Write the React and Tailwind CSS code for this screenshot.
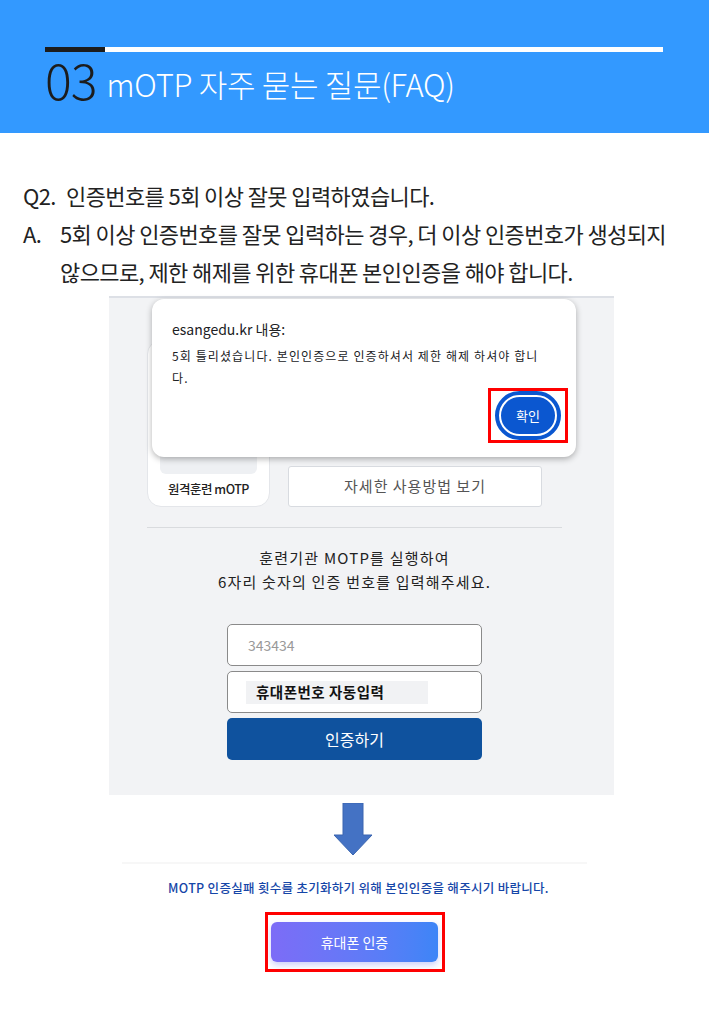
export default function App() {
  return (
    <div className="w-[709px] h-[1024px] bg-white overflow-hidden font-['Noto_Sans_CJK_KR',sans-serif]">
      {/* header */}
      <div className="h-[133px] bg-[#3399ff] pl-[45px] pt-[47px]">
        <div className="flex w-[618px] h-[5px]">
          <div className="w-[60px] bg-[#1c1c1c]" />
          <div className="flex-1 bg-white" />
        </div>
        <div className="flex items-end mt-[1px] h-[50px]">
          <span className="text-[50px] leading-[50px] font-light text-[#1c1c1c] tracking-[-1px]">03</span>
          <span className="ml-[10px] mb-[1px] text-[31px] leading-[36px] font-light text-white tracking-[-0.3px]">mOTP 자주 묻는 질문(FAQ)</span>
        </div>
      </div>

      {/* question */}
      <div className="pl-[23px] pt-[43px] text-[22px] leading-[38px] text-[#222] tracking-[-0.6px]">
        <div className="flex">
          <span className="w-[43px]">Q2.</span>
          <span>인증번호를 5회 이상 잘못 입력하였습니다.</span>
        </div>
        <div className="flex">
          <span className="w-[37px] shrink-0">A.</span>
          <span>
            5회 이상 인증번호를 잘못 입력하는 경우, 더 이상 인증번호가 생성되지
            <br />
            않으므로, 제한 해제를 위한 휴대폰 본인인증을 해야 합니다.
          </span>
        </div>
      </div>

      {/* screenshot */}
      <div className="relative ml-[109px] mt-[6px] w-[505px] h-[499px] bg-[#f2f3f5] border-t-2 border-[#dde0e6] pl-[38px] pt-[42px]">
        <div className="w-[415px]">
          <div className="flex items-end gap-[18px]">
            <div className="w-[123px] h-[167px] bg-white rounded-[14px] border border-[#e4e6ea] pt-[20px] px-[12px]">
              <div className="h-[113px] bg-[#eef0f3] rounded-[6px]" />
              <div className="text-[12.5px] leading-[30px] font-medium text-[#222] text-center tracking-[-0.5px]">원격훈련 mOTP</div>
            </div>
            <div className="w-[254px] h-[41px] bg-white border border-[#d8dbe0] rounded-[3px] flex items-center justify-center text-[15px] text-[#555] tracking-[1px]">
              자세한 사용방법 보기
            </div>
          </div>
          <div className="h-px bg-[#d9dbde] mt-[20px]" />
          <div className="mt-[18px] text-center text-[15px] leading-[24px] text-[#222] tracking-[1.2px]">
            훈련기관 MOTP를 실행하여
            <br />
            6자리 숫자의 인증 번호를 입력해주세요.
          </div>
          <div className="mx-auto w-[255px] mt-[30px] flex flex-col gap-[5px]">
            <div className="h-[42px] bg-white border border-[#8a8a8a] rounded-[5px] flex items-center pl-[20px] text-[14px] text-[#999]">
              343434
            </div>
            <div className="h-[42px] bg-white border border-[#8a8a8a] rounded-[5px] flex items-center pl-[18px]">
              <div className="w-[182px] h-[23px] bg-[#f1f2f4] flex items-center pl-[10px] text-[14.5px] font-bold text-[#111] tracking-[0.5px]">
                휴대폰번호 자동입력
              </div>
            </div>
            <div className="h-[42px] bg-[#0f529e] rounded-[5px] flex items-center justify-center text-[16px] text-white">
              인증하기
            </div>
          </div>
        </div>

        {/* alert dialog overlay */}
        <div className="absolute left-[43px] top-[1px] w-[424px] h-[158px] bg-white rounded-[12px] shadow-[0_2px_6px_rgba(0,0,0,0.3)] pl-[20px] pr-[12px] pt-[20px]">
          <div className="text-[14px] leading-[20px] text-[#202124]">esangedu.kr 내용:</div>
          <div className="mt-[6px] text-[12px] leading-[22px] text-[#202124] tracking-[1.1px] whitespace-nowrap">
            5회 틀리셨습니다. 본인인증으로 인증하셔서 제한 해제 하셔야 합니
            <br />
            다.
          </div>
          <div className="absolute right-[8px] top-[89px] w-[80px] h-[55px] border-[3px] border-[#ff0000] flex items-center justify-center">
            <div className="w-[66px] h-[49px] rounded-full bg-[#0b57d0] border-[2px] border-[#0b57d0] flex items-center justify-center">
              <div className="w-[58px] h-[41px] rounded-full border-[2px] border-white flex items-center justify-center text-[13px] text-white">확인</div>
            </div>
          </div>
        </div>
      </div>

      {/* arrow */}
      <div className="flex justify-center mt-[8px]">
        <svg width="40" height="53" viewBox="0 0 40 53" className="ml-[-4px]">
          <path d="M10 0 H30 V32 H39 L20 52 L1 32 H10 Z" fill="#4472c4" stroke="#3a65b0" strokeWidth="1" />
        </svg>
      </div>
      <div className="mx-auto w-[465px] h-[2px] bg-[#f7f7f7] mt-[6px]" />
      <div className="mt-[15px] text-center text-[12.5px] leading-[18px] font-medium text-[#1546a8] tracking-[0.3px] pl-[8px]">
        MOTP 인증실패 횟수를 초기화하기 위해 본인인증을 해주시기 바랍니다.
      </div>
      <div className="flex justify-center mt-[15px]">
        <div className="w-[180px] h-[60px] border-[3px] border-[#ff0000] flex items-center justify-center">
          <div className="w-[167px] h-[40px] rounded-[6px] bg-gradient-to-r from-[#7c6cf7] to-[#3d85f7] shadow-[0_3px_6px_rgba(90,100,240,0.3)] flex items-center justify-center text-[14px] text-white">
            휴대폰 인증
          </div>
        </div>
      </div>
    </div>
  );
}
